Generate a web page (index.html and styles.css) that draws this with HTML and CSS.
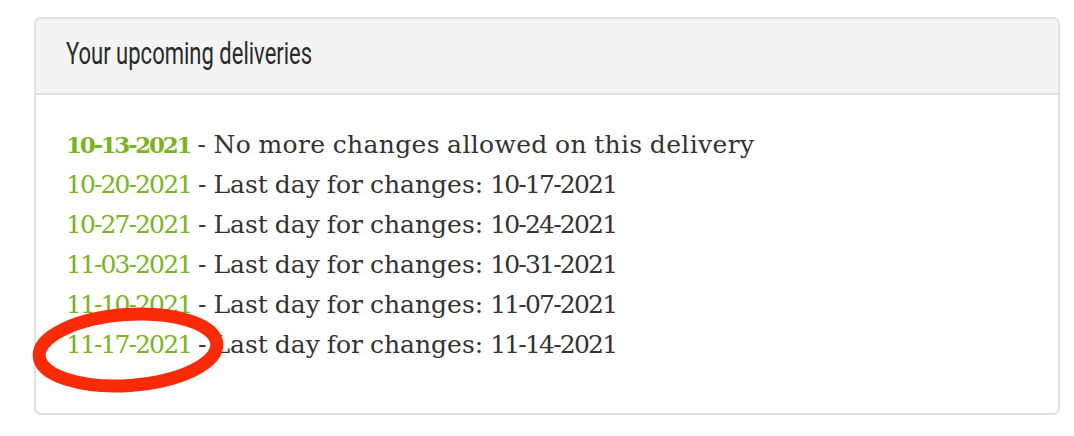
FILE: index.html
```html
<!DOCTYPE html>
<html>
<head>
<meta charset="utf-8">
<link rel="stylesheet" href="styles.css">
</head>
<body>
<div class="card">
  <div class="card-header"><span class="title">Your upcoming deliveries</span></div>
  <div class="card-body">
    <ul class="list">
      <li class="first"><a class="date bold">10-13-2021</a> - No more changes allowed on this delivery</li>
      <li><a class="date">10-20-2021</a> - Last day for changes: <span class="num">10-17-2021</span></li>
      <li><a class="date">10-27-2021</a> - Last day for changes: <span class="num">10-24-2021</span></li>
      <li><a class="date">11-03-2021</a> - Last day for changes: <span class="num">10-31-2021</span></li>
      <li><a class="date">11-10-2021</a> - Last day for changes: <span class="num">11-07-2021</span></li>
      <li><a class="date">11-17-2021</a> - Last day for changes: <span class="num">11-14-2021</span></li>
    </ul>
  </div>
</div>
<svg class="mark" width="200" height="90" viewBox="0 0 200 90">
  <ellipse cx="100" cy="45" rx="89" ry="35.5" fill="none" stroke="#fb2a07" stroke-width="13" transform="rotate(-4 100 45)"/>
</svg>
</body>
</html>
```
FILE: styles.css
```css
html, body { margin: 0; padding: 0; background: #fff; }
body { position: relative; width: 1074px; height: 436px; overflow: hidden; padding: 17px 0 0 34px; box-sizing: border-box; }
.card {
  width: 1026px;
  height: 398px;
  box-sizing: border-box;
  border: 2px solid #e0e0e0;
  border-radius: 7px;
  overflow: hidden;
}
.card-header {
  height: 76px;
  box-sizing: border-box;
  background: #f4f4f4;
  border-bottom: 2px solid #e0e0e0;
  padding: 15px 0 0 30px;
}
.title {
  display: inline-block;
  font-family: "Roboto", "Liberation Sans", sans-serif;
  font-size: 31px;
  line-height: 40px;
  color: #2a2a2a;
  transform: scaleX(0.71);
  transform-origin: left center;
  white-space: nowrap;
}
.card-body { padding: 30px 0 0 30px; }
.list { list-style: none; margin: 0; padding: 0; }
.list li {
  font-family: "DejaVu Serif", "Liberation Serif", serif;
  font-size: 25px;
  line-height: 40px;
  color: #333;
  white-space: nowrap;
  word-spacing: -1px;
}
.list li.first { letter-spacing: 0.35px; }
.date { color: #7ab51d; text-decoration: none; letter-spacing: -1.9px; }
.list li.first .date.bold { font-weight: bold; font-size: 23px; letter-spacing: -2.3px; }
.num { letter-spacing: -1.8px; }
.mark { position: absolute; left: 28px; top: 305px; }
```
